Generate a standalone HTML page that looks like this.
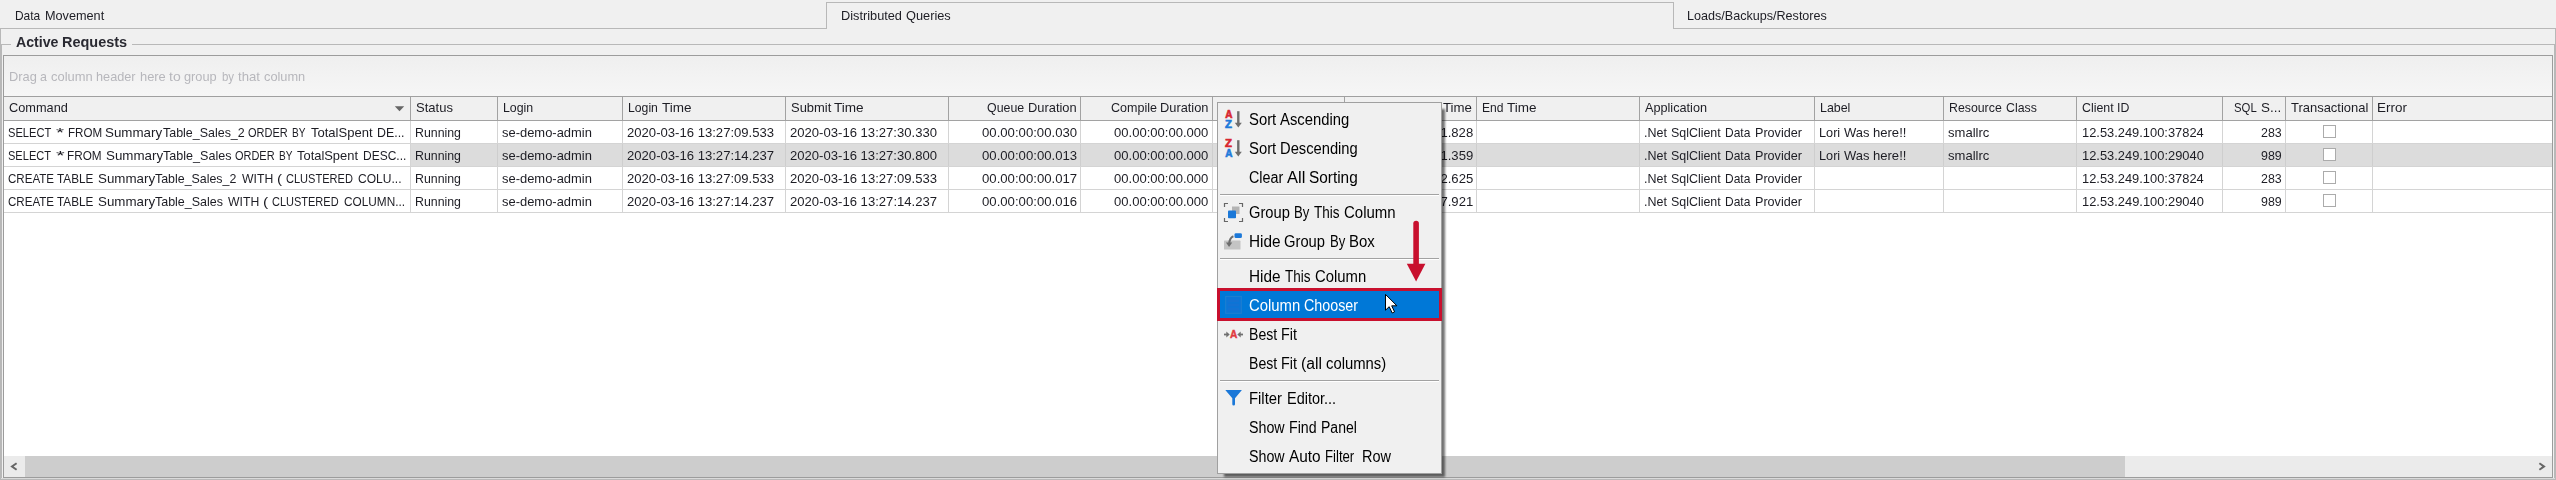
<!DOCTYPE html>
<html><head><meta charset="utf-8"><title>Active Requests</title>
<style>
html,body{margin:0;padding:0}
body{width:2556px;height:480px;overflow:hidden;background:#f0f0f0;position:relative;font-family:"Liberation Sans",sans-serif;font-size:13px;line-height:20px;color:#1d1d24}
div,span,svg{position:absolute;box-sizing:border-box}
span{white-space:pre;transform-origin:0 0;line-height:20px;height:20px}
.hl{background:#b8b8b8}
.vs{top:97px;width:1px;height:23px;background:#a2a2a2}
.cv{top:121px;width:1px;height:92px;background:#d4d4d4}
.sv{top:144px;width:1px;height:22px;background:#cecece}
.rl{left:4px;width:2548px;height:1px;background:#d4d4d4}
.cb{width:13px;height:13px;border:1px solid #ababab;background:#fff;left:2323px}
.b{font-weight:bold;font-size:14px;color:#2a2a32}
.g{color:#b7b7bc}
.m{font-size:15.6px;color:#000}
.w{font-size:15.6px;color:#fff}
.ms{left:1220px;width:219px;height:2px;background:linear-gradient(#a2a2a2 50%,#fff 50%)}
</style></head><body>

<div class="hl" style="left:0;top:28px;width:827px;height:1px"></div>
<div class="hl" style="left:826px;top:2px;width:848px;height:1px"></div>
<div class="hl" style="left:826px;top:2px;width:1px;height:27px"></div>
<div class="hl" style="left:1673px;top:2px;width:1px;height:27px"></div>
<div class="hl" style="left:1673px;top:28px;width:883px;height:1px"></div>
<div class="hl" style="left:0;top:28px;width:1px;height:452px"></div>
<div class="hl" style="left:2555px;top:28px;width:1px;height:452px"></div>
<div class="hl" style="left:0;top:479px;width:2556px;height:1px"></div>
<div class="hl" style="left:1px;top:44px;width:10px;height:1px"></div>
<div class="hl" style="left:132px;top:44px;width:2423px;height:1px"></div>
<div class="hl" style="left:1px;top:44px;width:1px;height:435px"></div>
<div class="hl" style="left:2554px;top:44px;width:1px;height:435px"></div>
<div class="hl" style="left:1px;top:478px;width:2554px;height:1px;background:#dadada"></div>
<div style="left:3px;top:55px;width:2550px;height:423px;border:1px solid #9c9c9c;background:#fff"></div>
<div style="left:4px;top:56px;width:2548px;height:40px;background:linear-gradient(#efefef,#f6f6f6)"></div>
<div style="left:4px;top:96px;width:2548px;height:1px;background:#a0a0a0"></div>
<div style="left:4px;top:97px;width:2548px;height:23px;background:#f0f0f0"></div>
<div style="left:4px;top:120px;width:2548px;height:1px;background:#a2a2a2"></div>
<div style="left:411px;top:144px;width:2141px;height:22px;background:#dcdcdc"></div>
<div class="vs" style="left:410px"></div><div class="cv" style="left:410px"></div>
<div class="vs" style="left:497px"></div><div class="cv" style="left:497px"></div>
<div class="sv" style="left:497px"></div>
<div class="vs" style="left:622px"></div><div class="cv" style="left:622px"></div>
<div class="sv" style="left:622px"></div>
<div class="vs" style="left:785px"></div><div class="cv" style="left:785px"></div>
<div class="sv" style="left:785px"></div>
<div class="vs" style="left:948px"></div><div class="cv" style="left:948px"></div>
<div class="sv" style="left:948px"></div>
<div class="vs" style="left:1080px"></div><div class="cv" style="left:1080px"></div>
<div class="sv" style="left:1080px"></div>
<div class="vs" style="left:1212px"></div><div class="cv" style="left:1212px"></div>
<div class="sv" style="left:1212px"></div>
<div class="vs" style="left:1344px"></div><div class="cv" style="left:1344px"></div>
<div class="sv" style="left:1344px"></div>
<div class="vs" style="left:1476px"></div><div class="cv" style="left:1476px"></div>
<div class="sv" style="left:1476px"></div>
<div class="vs" style="left:1639px"></div><div class="cv" style="left:1639px"></div>
<div class="sv" style="left:1639px"></div>
<div class="vs" style="left:1814px"></div><div class="cv" style="left:1814px"></div>
<div class="sv" style="left:1814px"></div>
<div class="vs" style="left:1943px"></div><div class="cv" style="left:1943px"></div>
<div class="sv" style="left:1943px"></div>
<div class="vs" style="left:2076px"></div><div class="cv" style="left:2076px"></div>
<div class="sv" style="left:2076px"></div>
<div class="vs" style="left:2222px"></div><div class="cv" style="left:2222px"></div>
<div class="sv" style="left:2222px"></div>
<div class="vs" style="left:2285px"></div><div class="cv" style="left:2285px"></div>
<div class="sv" style="left:2285px"></div>
<div class="vs" style="left:2372px"></div><div class="cv" style="left:2372px"></div>
<div class="sv" style="left:2372px"></div>
<div class="rl" style="top:143px"></div>
<div class="rl" style="top:166px"></div>
<div class="rl" style="top:189px"></div>
<div class="rl" style="top:212px"></div>
<div class="cb" style="top:125px"></div>
<div class="cb" style="top:148px"></div>
<div class="cb" style="top:171px"></div>
<div class="cb" style="top:194px"></div>
<svg style="left:394px;top:105px" width="11" height="7" viewBox="0 0 11 7"><path d="M0.800 1.200h9.400l-4.700 5z" fill="#666"/></svg>
<div style="left:4px;top:456px;width:2548px;height:21px;background:#ebebeb"></div>
<div style="left:25px;top:456px;width:2100px;height:21px;background:#cdcdcd"></div>
<svg style="left:8px;top:460px" width="12" height="12" viewBox="8 460 12 12"><path d="M16.600 463.300L12 466.500l4.600 3.200" fill="none" stroke="#666" stroke-width="2"/></svg>
<svg style="left:2536px;top:460px" width="12" height="12" viewBox="2536 460 12 12"><path d="M2539.400 463.300L2544 466.500l-4.600 3.200" fill="none" stroke="#666" stroke-width="2"/></svg>
<span style="left:15.36px;top:6px;transform:scaleX(0.9183)">Data </span>
<span style="left:44.91px;top:6px;transform:scaleX(0.9752)">Movement</span>
<span style="left:841.30px;top:6px;transform:scaleX(0.9812)">Distributed </span>
<span style="left:905.60px;top:6px;transform:scaleX(0.9834)">Queries</span>
<span style="left:1686.52px;top:6px;transform:scaleX(0.9676)">Loads/Backups/Restores</span>
<span class="b" style="left:15.67px;top:32px;transform:scaleX(1.0112)">Active </span>
<span class="b" style="left:61.62px;top:32px;transform:scaleX(1.0338)">Requests</span>
<span class="g" style="left:8.50px;top:67px;transform:scaleX(0.9873)">Drag </span>
<span class="g" style="left:40.00px;top:67px;transform:scaleX(0.9580)">a </span>
<span class="g" style="left:50.90px;top:67px;transform:scaleX(0.9934)">column </span>
<span class="g" style="left:96.09px;top:67px;transform:scaleX(0.9770)">header </span>
<span class="g" style="left:139.78px;top:67px;transform:scaleX(0.9911)">here </span>
<span class="g" style="left:168.93px;top:67px;transform:scaleX(1.0752)">to </span>
<span class="g" style="left:184.40px;top:67px;transform:scaleX(0.9836)">group </span>
<span class="g" style="left:221.77px;top:67px;transform:scaleX(0.8805)">by </span>
<span class="g" style="left:238.31px;top:67px;transform:scaleX(1.0091)">that </span>
<span class="g" style="left:264.40px;top:67px;transform:scaleX(0.9836)">column</span>
<span style="left:8.73px;top:98px;transform:scaleX(0.9818)">Command</span>
<span style="left:416.15px;top:98px;transform:scaleX(1.0008)">Status</span>
<span style="left:503.03px;top:98px;transform:scaleX(0.9503)">Login</span>
<span style="left:627.84px;top:98px;transform:scaleX(0.9404)">Login </span>
<span style="left:661.53px;top:98px;transform:scaleX(1.0376)">Time</span>
<span style="left:791.05px;top:98px;transform:scaleX(0.9964)">Submit </span>
<span style="left:834.23px;top:98px;transform:scaleX(1.0448)">Time</span>
<span style="left:987.17px;top:98px;transform:scaleX(0.9526)">Queue </span>
<span style="left:1027.60px;top:98px;transform:scaleX(0.9903)">Duration</span>
<span style="left:1110.64px;top:98px;transform:scaleX(0.9642)">Compile </span>
<span style="left:1159.70px;top:98px;transform:scaleX(0.9861)">Duration</span>
<span style="left:1410.63px;top:98px;transform:scaleX(1.0211)">Start </span>
<span style="left:1442.84px;top:98px;transform:scaleX(1.0196)">Time</span>
<span style="left:1482.35px;top:98px;transform:scaleX(0.9286)">End </span>
<span style="left:1506.83px;top:98px;transform:scaleX(1.0376)">Time</span>
<span style="left:1644.68px;top:98px;transform:scaleX(0.9745)">Application</span>
<span style="left:1820.13px;top:98px;transform:scaleX(0.9550)">Label</span>
<span style="left:1949.13px;top:98px;transform:scaleX(0.9477)">Resource </span>
<span style="left:2006.15px;top:98px;transform:scaleX(0.9472)">Class</span>
<span style="left:2082.45px;top:98px;transform:scaleX(0.9521)">Client </span>
<span style="left:2117.39px;top:98px;transform:scaleX(0.9480)">ID</span>
<span style="left:2234.06px;top:98px;transform:scaleX(0.8723)">SQL </span>
<span style="left:2261.12px;top:98px;transform:scaleX(1.0311)">S...</span>
<span style="left:2290.64px;top:98px;transform:scaleX(0.9973)">Transactional</span>
<span style="left:2376.95px;top:98px;transform:scaleX(1.0344)">Error</span>
<span style="left:7.67px;top:123px;transform:scaleX(0.8564)">SELECT </span>
<span style="left:55.88px;top:123px;transform:scaleX(1.5905)">* </span>
<span style="left:67.69px;top:123px;transform:scaleX(0.8916)">FROM </span>
<span style="left:105.43px;top:123px;transform:scaleX(1.0269)">Summary </span>
<span style="left:162.66px;top:123px;transform:scaleX(0.9580)">Table_Sales_2 </span>
<span style="left:248.44px;top:123px;transform:scaleX(0.8458)">ORDER </span>
<span style="left:292.29px;top:123px;transform:scaleX(0.7783)">BY </span>
<span style="left:310.89px;top:123px;transform:scaleX(1.0010)">TotalSpent </span>
<span style="left:376.63px;top:123px;transform:scaleX(0.9518)">DE...</span>
<span style="left:415.03px;top:123px;transform:scaleX(0.9488)">Running</span>
<span style="left:502.08px;top:123px;transform:scaleX(0.9950)">se-demo-admin</span>
<span style="left:626.56px;top:123px;transform:scaleX(1.0075)">2020-03-16 13:27:09.533</span>
<span style="left:790.11px;top:123px;transform:scaleX(1.0067)">2020-03-16 13:27:30.330</span>
<span style="left:981.66px;top:123px;transform:scaleX(1.0116)">00.00:00:00.030</span>
<span style="left:1114.42px;top:123px;transform:scaleX(1.0040)">00.00:00:00.000</span>
<span style="left:1325.61px;top:123px;transform:scaleX(1.0081)">2020-03-16 13:27:31.828</span>
<span style="left:1643.51px;top:123px;transform:scaleX(0.9598)">.Net </span>
<span style="left:1670.79px;top:123px;transform:scaleX(0.9553)">SqlClient </span>
<span style="left:1724.76px;top:123px;transform:scaleX(0.9221)">Data </span>
<span style="left:1754.71px;top:123px;transform:scaleX(0.9697)">Provider</span>
<span style="left:1818.71px;top:123px;transform:scaleX(0.9775)">Lori </span>
<span style="left:1843.91px;top:123px;transform:scaleX(0.9978)">Was </span>
<span style="left:1873.17px;top:123px;transform:scaleX(1.0044)">here!!</span>
<span style="left:1947.77px;top:123px;transform:scaleX(1.0043)">smallrc</span>
<span style="left:2081.72px;top:123px;transform:scaleX(0.9903)">12.53.249.100:37824</span>
<span style="left:2260.75px;top:123px;transform:scaleX(0.9531)">283</span>
<span style="left:7.58px;top:146px;transform:scaleX(0.8504)">SELECT </span>
<span style="left:55.59px;top:146px;transform:scaleX(1.7209)">* </span>
<span style="left:67.47px;top:146px;transform:scaleX(0.9053)">FROM </span>
<span style="left:105.63px;top:146px;transform:scaleX(1.0269)">Summary </span>
<span style="left:162.86px;top:146px;transform:scaleX(0.9662)">Table_Sales </span>
<span style="left:235.24px;top:146px;transform:scaleX(0.8436)">ORDER </span>
<span style="left:279.29px;top:146px;transform:scaleX(0.7783)">BY </span>
<span style="left:297.45px;top:146px;transform:scaleX(0.9928)">TotalSpent </span>
<span style="left:362.86px;top:146px;transform:scaleX(0.9220)">DESC...</span>
<span style="left:415.03px;top:146px;transform:scaleX(0.9488)">Running</span>
<span style="left:502.08px;top:146px;transform:scaleX(0.9950)">se-demo-admin</span>
<span style="left:626.56px;top:146px;transform:scaleX(1.0077)">2020-03-16 13:27:14.237</span>
<span style="left:790.11px;top:146px;transform:scaleX(1.0067)">2020-03-16 13:27:30.800</span>
<span style="left:981.66px;top:146px;transform:scaleX(1.0122)">00.00:00:00.013</span>
<span style="left:1114.42px;top:146px;transform:scaleX(1.0040)">00.00:00:00.000</span>
<span style="left:1325.61px;top:146px;transform:scaleX(1.0084)">2020-03-16 13:27:31.359</span>
<span style="left:1643.51px;top:146px;transform:scaleX(0.9598)">.Net </span>
<span style="left:1670.79px;top:146px;transform:scaleX(0.9553)">SqlClient </span>
<span style="left:1724.76px;top:146px;transform:scaleX(0.9221)">Data </span>
<span style="left:1754.71px;top:146px;transform:scaleX(0.9697)">Provider</span>
<span style="left:1818.71px;top:146px;transform:scaleX(0.9775)">Lori </span>
<span style="left:1843.91px;top:146px;transform:scaleX(0.9978)">Was </span>
<span style="left:1873.17px;top:146px;transform:scaleX(1.0044)">here!!</span>
<span style="left:1947.77px;top:146px;transform:scaleX(1.0043)">smallrc</span>
<span style="left:2081.72px;top:146px;transform:scaleX(0.9916)">12.53.249.100:29040</span>
<span style="left:2260.74px;top:146px;transform:scaleX(0.9545)">989</span>
<span style="left:7.69px;top:169px;transform:scaleX(0.8900)">CREATE </span>
<span style="left:57.18px;top:169px;transform:scaleX(0.9031)">TABLE </span>
<span style="left:97.83px;top:169px;transform:scaleX(1.0269)">Summary </span>
<span style="left:155.06px;top:169px;transform:scaleX(0.9539)">Table_Sales_2 </span>
<span style="left:241.72px;top:169px;transform:scaleX(0.9398)">WITH </span>
<span style="left:276.85px;top:169px;transform:scaleX(1.1741)">( </span>
<span style="left:286.12px;top:169px;transform:scaleX(0.8494)">CLUSTERED </span>
<span style="left:357.66px;top:169px;transform:scaleX(0.9263)">COLU...</span>
<span style="left:415.03px;top:169px;transform:scaleX(0.9488)">Running</span>
<span style="left:502.08px;top:169px;transform:scaleX(0.9950)">se-demo-admin</span>
<span style="left:626.56px;top:169px;transform:scaleX(1.0075)">2020-03-16 13:27:09.533</span>
<span style="left:790.11px;top:169px;transform:scaleX(1.0072)">2020-03-16 13:27:09.533</span>
<span style="left:981.66px;top:169px;transform:scaleX(1.0125)">00.00:00:00.017</span>
<span style="left:1114.42px;top:169px;transform:scaleX(1.0040)">00.00:00:00.000</span>
<span style="left:1325.61px;top:169px;transform:scaleX(1.0082)">2020-03-16 13:27:32.625</span>
<span style="left:1643.51px;top:169px;transform:scaleX(0.9598)">.Net </span>
<span style="left:1670.79px;top:169px;transform:scaleX(0.9553)">SqlClient </span>
<span style="left:1724.76px;top:169px;transform:scaleX(0.9221)">Data </span>
<span style="left:1754.71px;top:169px;transform:scaleX(0.9697)">Provider</span>
<span style="left:2081.72px;top:169px;transform:scaleX(0.9903)">12.53.249.100:37824</span>
<span style="left:2260.75px;top:169px;transform:scaleX(0.9531)">283</span>
<span style="left:7.69px;top:192px;transform:scaleX(0.8900)">CREATE </span>
<span style="left:57.18px;top:192px;transform:scaleX(0.9031)">TABLE </span>
<span style="left:97.83px;top:192px;transform:scaleX(1.0269)">Summary </span>
<span style="left:155.06px;top:192px;transform:scaleX(0.9591)">Table_Sales </span>
<span style="left:228.02px;top:192px;transform:scaleX(0.9398)">WITH </span>
<span style="left:262.83px;top:192px;transform:scaleX(1.2043)">( </span>
<span style="left:272.22px;top:192px;transform:scaleX(0.8455)">CLUSTERED </span>
<span style="left:344.08px;top:192px;transform:scaleX(0.9090)">COLUMN...</span>
<span style="left:415.03px;top:192px;transform:scaleX(0.9488)">Running</span>
<span style="left:502.08px;top:192px;transform:scaleX(0.9950)">se-demo-admin</span>
<span style="left:626.56px;top:192px;transform:scaleX(1.0077)">2020-03-16 13:27:14.237</span>
<span style="left:790.11px;top:192px;transform:scaleX(1.0073)">2020-03-16 13:27:14.237</span>
<span style="left:981.66px;top:192px;transform:scaleX(1.0125)">00.00:00:00.016</span>
<span style="left:1114.42px;top:192px;transform:scaleX(1.0040)">00.00:00:00.000</span>
<span style="left:1325.61px;top:192px;transform:scaleX(1.0082)">2020-03-16 13:27:37.921</span>
<span style="left:1643.51px;top:192px;transform:scaleX(0.9598)">.Net </span>
<span style="left:1670.79px;top:192px;transform:scaleX(0.9553)">SqlClient </span>
<span style="left:1724.76px;top:192px;transform:scaleX(0.9221)">Data </span>
<span style="left:1754.71px;top:192px;transform:scaleX(0.9697)">Provider</span>
<span style="left:2081.72px;top:192px;transform:scaleX(0.9916)">12.53.249.100:29040</span>
<span style="left:2260.74px;top:192px;transform:scaleX(0.9545)">989</span>
<div style="left:1223.5px;top:109px;width:221px;height:367.5px;background:rgba(0,0,0,0.55);filter:blur(1.2px)"></div>
<div style="left:1217px;top:102px;width:225px;height:372px;background:#f0f0f0;border:1px solid #a0a0a0"></div>
<div class="ms" style="top:194px"></div>
<div class="ms" style="top:258px"></div>
<div class="ms" style="top:380px"></div>
<div style="left:1217px;top:288px;width:225px;height:33px;background:#0078d7;border:3px solid #c8102e"></div>

<span class="m" style="left:1248.61px;top:110px;transform:scaleX(0.9514)">Sort </span>
<span class="m" style="left:1279.72px;top:110px;transform:scaleX(0.9495)">Ascending</span>
<span class="m" style="left:1248.61px;top:139px;transform:scaleX(0.9514)">Sort </span>
<span class="m" style="left:1280.29px;top:139px;transform:scaleX(0.9439)">Descending</span>
<span class="m" style="left:1248.67px;top:168px;transform:scaleX(0.9189)">Clear </span>
<span class="m" style="left:1286.69px;top:168px;transform:scaleX(1.0560)">All </span>
<span class="m" style="left:1308.68px;top:168px;transform:scaleX(0.9863)">Sorting</span>
<span class="m" style="left:1248.67px;top:203px;transform:scaleX(0.9433)">Group </span>
<span class="m" style="left:1294.19px;top:203px;transform:scaleX(0.8401)">By </span>
<span class="m" style="left:1313.86px;top:203px;transform:scaleX(0.8658)">This </span>
<span class="m" style="left:1343.54px;top:203px;transform:scaleX(0.9610)">Column</span>
<span class="m" style="left:1248.95px;top:232px;transform:scaleX(0.9848)">Hide </span>
<span class="m" style="left:1284.27px;top:232px;transform:scaleX(0.9457)">Group </span>
<span class="m" style="left:1329.89px;top:232px;transform:scaleX(0.8401)">By </span>
<span class="m" style="left:1349.47px;top:232px;transform:scaleX(0.9589)">Box</span>
<span class="m" style="left:1248.95px;top:267px;transform:scaleX(0.9848)">Hide </span>
<span class="m" style="left:1285.26px;top:267px;transform:scaleX(0.8658)">This </span>
<span class="m" style="left:1314.84px;top:267px;transform:scaleX(0.9534)">Column</span>
<span class="w" style="left:1249.14px;top:296px;transform:scaleX(0.9534)">Column </span>
<span class="w" style="left:1304.07px;top:296px;transform:scaleX(0.9168)">Chooser</span>
<span class="m" style="left:1249.03px;top:325px;transform:scaleX(0.9023)">Best </span>
<span class="m" style="left:1281.41px;top:325px;transform:scaleX(0.9197)">Fit</span>
<span class="m" style="left:1249.03px;top:354px;transform:scaleX(0.9023)">Best </span>
<span class="m" style="left:1281.41px;top:354px;transform:scaleX(0.9197)">Fit </span>
<span class="m" style="left:1301.11px;top:354px;transform:scaleX(1.0077)">(all </span>
<span class="m" style="left:1325.75px;top:354px;transform:scaleX(0.9523)">columns)</span>
<span class="m" style="left:1248.98px;top:389px;transform:scaleX(0.9512)">Filter </span>
<span class="m" style="left:1286.60px;top:389px;transform:scaleX(0.9285)">Editor...</span>
<span class="m" style="left:1248.64px;top:418px;transform:scaleX(0.9136)">Show </span>
<span class="m" style="left:1288.72px;top:418px;transform:scaleX(0.9091)">Find </span>
<span class="m" style="left:1321.03px;top:418px;transform:scaleX(0.8986)">Panel</span>
<span class="m" style="left:1248.64px;top:447px;transform:scaleX(0.9136)">Show </span>
<span class="m" style="left:1289.01px;top:447px;transform:scaleX(0.9875)">Auto </span>
<span class="m" style="left:1325.08px;top:447px;transform:scaleX(0.8438)">Filter </span>
<span class="m" style="left:1361.80px;top:447px;transform:scaleX(0.9299)">Row</span>
<svg style="left:1217px;top:102px" width="225" height="372" viewBox="1217 102 225 372">
<!-- sort ascending icon -->
<g font-family="Liberation Sans, sans-serif" font-weight="bold" font-size="10" stroke-width="0.600">
<text transform="translate(1225.200 118)" fill="#d8262f" stroke="#d8262f">A</text>
<text transform="translate(1225.100 127.700) scale(1.140 1.120)" fill="#1f7ada" stroke="#1f7ada">Z</text>
<text transform="translate(1225.100 147.100) scale(1.140 1.120)" fill="#d8262f" stroke="#d8262f">Z</text>
<text transform="translate(1225.200 156.500)" fill="#1f7ada" stroke="#1f7ada">A</text>
</g>
<path d="M1238.300 111.200v13" stroke="#6e6e6e" stroke-width="2.400" fill="none"/>
<path d="M1234.800 122.800h7l-3.500 4.800z" fill="#6e6e6e"/>
<path d="M1238.300 140.200v13" stroke="#6e6e6e" stroke-width="2.400" fill="none"/>
<path d="M1234.800 151.800h7l-3.500 4.800z" fill="#6e6e6e"/>
<!-- group by this column -->
<path d="M1224.500 207v-3.500h3.500M1239 203.500h3.500v3.500M1242.500 218v3.500h-3.500M1228 221.500h-3.500v-3.500" fill="none" stroke="#666" stroke-width="1.200"/>
<rect x="1232" y="206.500" width="7.500" height="7.500" fill="#b4b4b4"/>
<rect x="1228" y="210.500" width="8" height="7.800" rx="0.800" fill="#1b78d8"/>
<!-- hide group by box -->
<rect x="1224" y="240.600" width="16.500" height="9" rx="0.600" fill="#c4c4c4"/>
<rect x="1234.500" y="233.200" width="7.400" height="4.900" rx="1.400" fill="#1b78d8"/>
<path d="M1233.400 236.200q-3.800 1.400-4.200 7.500" fill="none" stroke="#6c6c6c" stroke-width="2"/>
<path d="M1226 242.600h6.200l-3.100 4.400z" fill="#6c6c6c"/>
<!-- column chooser faint icon -->
<rect x="1225.700" y="296.400" width="15.600" height="16.900" fill="#0c75d6" stroke="#2080d0" stroke-width="1"/><path d="M1228 300.700h11M1228 305h11M1228 309.300h11" stroke="#1472d3" stroke-width="2.400"/>
<!-- best fit icon -->
<text x="1230.100" y="338.300" font-family="Liberation Sans, sans-serif" font-weight="bold" font-size="10.200" fill="#e0393f" stroke="#e0393f" stroke-width="0.400">A</text>
<path d="M1224 334.500h3" stroke="#707070" stroke-width="1.800"/><path d="M1226.300 331.500l3.400 3l-3.400 3z" fill="#707070"/>
<path d="M1243 334.500h-3" stroke="#707070" stroke-width="1.800"/><path d="M1240.700 331.500l-3.400 3l3.400 3z" fill="#707070"/>
<!-- filter icon -->
<path d="M1225.300 389.900H1241.900L1235 398.300V404.200a1.350 1.350 0 0 1 -2.700 0V398.300z" fill="#1b78d8"/>
<!-- red arrow -->
<path d="M1416.100 223.500v42" stroke="#c8102e" stroke-width="5.600" stroke-linecap="round"/>
<path d="M1406.800 263.800h18.600l-9.300 17.600z" fill="#c8102e"/>
<!-- cursor -->
<path d="M1385.500 294.400v15.800l3.700-3.500l3 6.300l2.400-1.100l-2.900-6.100h5.200z" fill="#fff" stroke="#000" stroke-width="1" stroke-linejoin="miter"/>
</svg>

</body></html>
